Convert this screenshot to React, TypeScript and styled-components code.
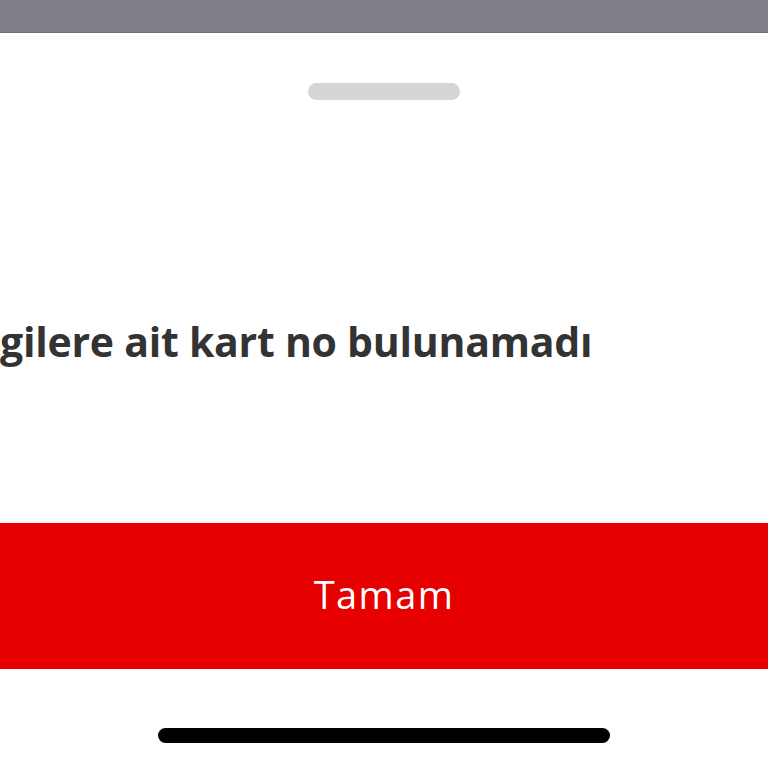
import styled, { createGlobalStyle } from "styled-components";

const GlobalStyle = createGlobalStyle`
  html, body {
    margin: 0;
    padding: 0;
    background: #ffffff;
  }
  body {
    font-family: "Open Sans", Lato, sans-serif;
  }
`

const Screen = styled.div`
  width: 768px;
  height: 768px;
  display: flex;
  flex-direction: column;
  overflow: hidden;
  background: #ffffff;
`

const Backdrop = styled.div`
  height: 32px;
  flex-shrink: 0;
  background: #817f89;
  border-bottom: 1px solid #6f6e75;
`

const Sheet = styled.div`
  flex: 1;
  display: flex;
  flex-direction: column;
  align-items: center;
  padding-top: 50px;
`

const Grabber = styled.div`
  width: 152px;
  height: 17px;
  border-radius: 9px;
  background: #d6d6d6;
`

const Message = styled.p`
  align-self: stretch;
  margin: 217px 0 0;
  font-family: "Open Sans", Lato, sans-serif;
  font-weight: 700;
  font-size: 41px;
  line-height: 48px;
  letter-spacing: -0.25px;
  color: #333333;
  white-space: nowrap;
`

const ConfirmButton = styled.button`
  align-self: stretch;
  margin-top: 158px;
  height: 146px;
  padding: 0 0 4px;
  border: none;
  background: #e60000;
  color: #ffffff;
  font-family: "Open Sans", Lato, sans-serif;
  font-weight: 400;
  font-size: 38px;
  letter-spacing: 1.4px;
  cursor: pointer;
`

const HomeIndicator = styled.div`
  margin-top: 59px;
  width: 452px;
  height: 15px;
  border-radius: 8px;
  background: #000000;
`

const App = () => {
  return (
    <>
      <GlobalStyle />
      <Screen>
        <Backdrop />
        <Sheet>
          <Grabber />
          <Message>gilere ait kart no bulunamadı</Message>
          <ConfirmButton>Tamam</ConfirmButton>
          <HomeIndicator />
        </Sheet>
      </Screen>
    </>
  )
}

export default App
